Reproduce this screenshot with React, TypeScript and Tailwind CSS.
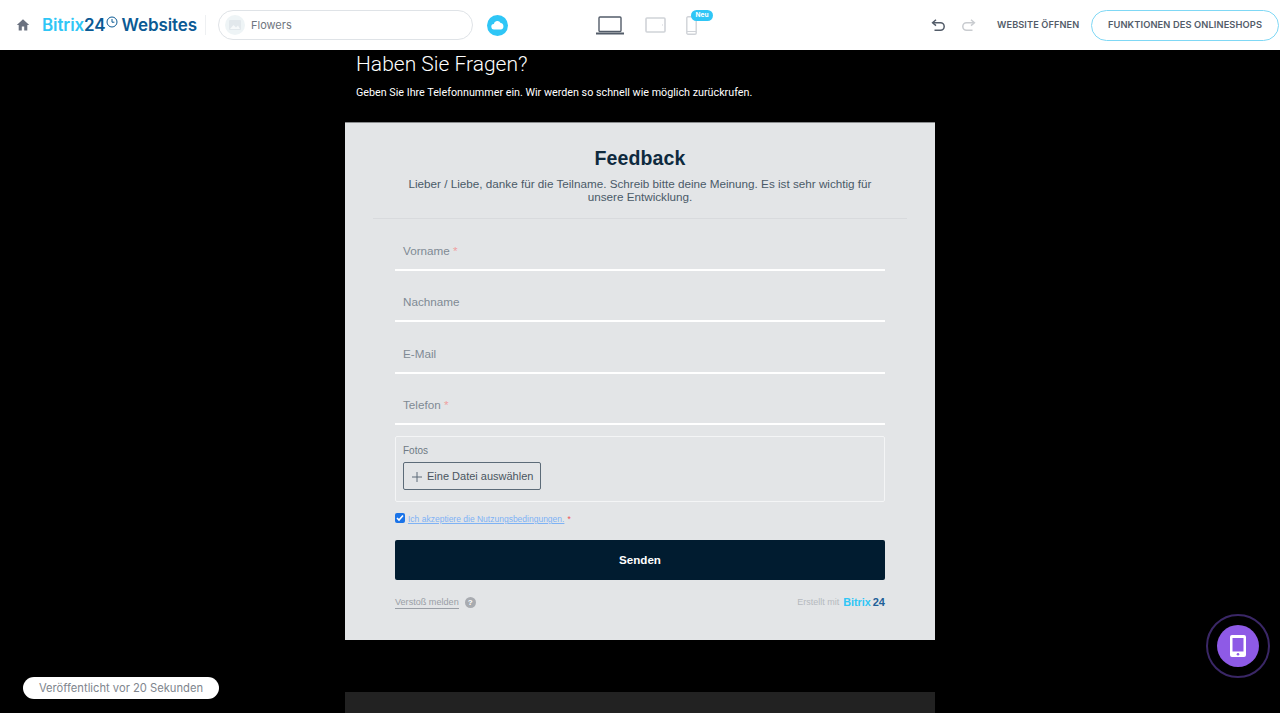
const Field = ({ label, star }: { label: string; star?: boolean }) => (
  <div className="h-[51.5px] flex flex-col justify-end border-b-2 border-white shrink-0">
    <div className="h-[28px] pl-[8px] text-[11.7px] leading-[19px] text-[#7f8a94]">
      {label}
      {star && <span className="text-[#f0a0a0]"> *</span>}
    </div>
  </div>
);

export default function App() {
  return (
    <div className="relative h-[713px] w-[1280px] overflow-hidden bg-black font-['Liberation_Sans',sans-serif]">
      <header className="h-[50px] bg-white flex items-center font-['Inter',sans-serif]">
        <svg className="ml-[16px] w-[14px] h-[14px] shrink-0" viewBox="0 0 14 14">
          <path d="M7 1.2 0.8 7h1.9v5.6h3.1V8.6h2.4v4h3.1V7h1.9z" fill="#6b7280" />
        </svg>
        <div className="ml-[12px] w-[154px] shrink-0 flex text-[17px] font-semibold leading-[24px] tracking-[-0.1px] whitespace-nowrap">
          <span className="text-[#2fc6f6]">Bitrix</span>
          <span className="text-[#0b5a94]">24</span>
          <svg className="w-[12px] h-[12px] shrink-0 mt-[3px]" viewBox="0 0 12 12" fill="none" stroke="#0b5a94" strokeWidth="1">
            <circle cx="6" cy="6" r="5" />
            <path d="M6 3v3.2h2.4" />
          </svg>
          <span className="ml-[4px] text-[#0b5a94]">Websites</span>
        </div>
        <div className="ml-[9px] w-px h-[20px] bg-[#eef0f2] shrink-0" />
        <div className="ml-[12px] w-[255px] h-[30px] shrink-0 rounded-full border border-[#dfe3e7] flex items-center pl-[6px]">
          <div className="w-[20px] h-[20px] rounded-full bg-[#eef4f6] flex items-center justify-center">
            <svg className="w-[12px] h-[10px]" viewBox="0 0 12 10">
              <rect width="12" height="10" rx="1" fill="#e2e8ec" />
              <path d="M1 9l3.5-4 2.5 2.5L9 5.5 11 9z" fill="#f6f9fa" />
            </svg>
          </div>
          <span className="ml-[6px] pt-[1px] text-[11px] text-[#6f7680]">Flowers</span>
        </div>
        <div className="ml-[14px] w-[21px] h-[21px] shrink-0 rounded-full bg-[#2fc6f6] flex items-center justify-center">
          <svg className="w-[13px] h-[10px]" viewBox="0 0 13 10">
            <path d="M3.2 9.5a2.7 2.7 0 0 1-.4-5.4A3.6 3.6 0 0 1 9.6 3 3.3 3.3 0 0 1 9.8 9.5z" fill="#fff" />
          </svg>
        </div>
        <svg className="ml-[88px] w-[28px] h-[19px] shrink-0" viewBox="0 0 28 19" fill="none">
          <rect x="3" y="1" width="22" height="14.5" rx="1" stroke="#535c69" strokeWidth="1.4" />
          <path d="M0.5 17.5h27" stroke="#535c69" strokeWidth="2" strokeLinecap="round" />
        </svg>
        <svg className="ml-[21px] w-[21px] h-[16px] shrink-0" viewBox="0 0 21 16" fill="none">
          <rect x="1" y="1" width="19" height="14" rx="1" stroke="#d0d3d8" strokeWidth="1.6" />
          <path d="M17.5 7.5v1" stroke="#d0d3d8" />
        </svg>
        <div className="relative ml-[20px] w-[11px] h-[19px] shrink-0">
          <svg className="w-[11px] h-[19px] absolute top-[0px]" viewBox="0 0 11 19" fill="none">
            <rect x="0.8" y="0.8" width="9.4" height="17.4" rx="1.2" stroke="#d0d3d8" strokeWidth="1.4" />
            <path d="M1 15.5h9" stroke="#d0d3d8" />
          </svg>
          <span className="absolute left-[5px] top-[-6px] w-[22px] h-[11px] rounded-full bg-[#2fc6f6] text-white text-[6.5px] font-bold leading-[11px] text-center">Neu</span>
        </div>
        <svg className="ml-[234px] w-[15px] h-[13px] shrink-0" viewBox="0 0 15 13" fill="none" stroke="#535c69" strokeWidth="1.5">
          <path d="M5 .8 1.6 3.8 5 6.6" />
          <path d="M2 3.8h7.5a3.6 3.6 0 0 1 0 7.4H3.5" />
        </svg>
        <svg className="ml-[15px] w-[15px] h-[13px] shrink-0" viewBox="0 0 15 13" fill="none" stroke="#c9ccd0" strokeWidth="1.5">
          <path d="M10 .8l3.4 3-3.4 2.8" />
          <path d="M13 3.8H5.5a3.6 3.6 0 0 0 0 7.4h6" />
        </svg>
        <span className="ml-[21px] w-[81px] shrink-0 text-[9.2px] font-semibold text-[#535c69] tracking-[0.1px] whitespace-nowrap">WEBSITE ÖFFNEN</span>
        <div className="ml-[13px] w-[188px] h-[31px] shrink-0 rounded-full border border-[#7fd8f5] flex items-center justify-center text-[9.3px] font-semibold text-[#535c69] tracking-[0.1px] whitespace-nowrap">
          FUNKTIONEN DES ONLINESHOPS
        </div>
      </header>

      <main className="w-[590px] ml-[345px]">
        <div className="pl-[11px] h-[72px] text-white font-['Roboto',sans-serif]">
          <h1 className="text-[21px] font-light leading-[28px] h-[28px]">Haben Sie Fragen?</h1>
          <p className="mt-[7px] text-[10.75px] leading-[16px] whitespace-nowrap">Geben Sie Ihre Telefonnummer ein. Wir werden so schnell wie möglich zurückrufen.</p>
        </div>
        <section className="h-[518px] bg-[#e3e5e7] border-t border-[#8a8c8e] flex flex-col">
          <div className="mx-[28px] h-[96px] border-b border-[#d8dadd] text-center">
            <h2 className="pt-[23px] text-[19.5px] leading-[24px] font-bold text-[#0e2a3e] tracking-[0.1px]">Feedback</h2>
            <p className="mt-[7px] px-[32px] text-[11.7px] leading-[13px] text-[#4a5a68]">
              Lieber / Liebe, danke für die Teilname. Schreib bitte deine Meinung. Es ist sehr wichtig für unsere Entwicklung.
            </p>
          </div>
          <div className="mx-[50px] flex flex-col">
            <Field label="Vorname" star />
            <Field label="Nachname" />
            <Field label="E-Mail" />
            <Field label="Telefon" star />
            <div className="mt-[11px] h-[66px] rounded-[2px] border border-[#f4f5f6] pl-[7px] pt-[8px]">
              <div className="text-[10px] leading-[12px] text-[#6f7a84]">Fotos</div>
              <div className="mt-[5px] w-[138px] h-[28px] pt-[1px] rounded-[2px] border border-[#5c6b78] flex items-center pl-[8px] text-[11px] text-[#4a5560] whitespace-nowrap">
                <svg className="w-[10px] h-[10px] mr-[5px] shrink-0" viewBox="0 0 10 10" stroke="#5c6b78" strokeWidth="1">
                  <path d="M5 0v10M0 5h10" />
                </svg>
                Eine Datei auswählen
              </div>
            </div>
            <div className="mt-[10px] h-[12px] flex items-center">
              <div className="w-[10px] h-[10px] rounded-[2px] bg-[#1a73e8] flex items-center justify-center">
                <svg className="w-[8px] h-[8px]" viewBox="0 0 8 8" fill="none" stroke="#fff" strokeWidth="1.6">
                  <path d="M1 4l2 2 4-4.5" />
                </svg>
              </div>
              <span className="ml-[3px] pt-[3px] text-[8.5px] text-[#7eb2f5] underline">Ich akzeptiere die Nutzungsbedingungen.</span>
              <span className="ml-[3px] pt-[3px] text-[8.5px] text-[#e55]">*</span>
            </div>
            <div className="mt-[16px] h-[40px] rounded-[2px] bg-[#011c30] flex items-center justify-center text-white text-[11.6px] font-bold">
              Senden
            </div>
            <div className="mt-[15px] h-[14px] flex items-center text-[9.1px]">
              <span className="text-[#9a9fa6] border-b border-[#9a9fa6] leading-[12px]">Verstoß melden</span>
              <span className="ml-[6px] w-[11px] h-[11px] rounded-full bg-[#a8abb0] text-white text-[8px] font-bold leading-[11px] text-center">?</span>
              <span className="ml-auto pt-[1px] text-[#b5b9be] text-[9px]">Erstellt mit</span>
              <span className="ml-[4px] text-[10.8px] font-bold text-[#2fc6f6]">Bitrix</span>
              <span className="ml-[2px] text-[11px] font-bold text-[#215f98]">24</span>
            </div>
          </div>
        </section>
        <div className="mt-[52px] h-[40px] bg-[#222222]" />
      </main>

      <div className="absolute left-[23px] top-[677px] w-[196px] h-[22px] pt-[1px] rounded-full bg-white flex items-center justify-center font-['Inter',sans-serif] text-[11.2px] text-[#80868e]">
        Veröffentlicht vor 20 Sekunden
      </div>

      <div className="absolute left-[1206px] top-[614px] w-[64px] h-[64px] rounded-full border-2 border-[#3a2766] flex items-center justify-center">
        <div className="w-[42px] h-[42px] rounded-full bg-[#8e5ae6] flex items-center justify-center">
          <svg className="w-[16px] h-[22px]" viewBox="0 0 16 22">
            <path fillRule="evenodd" d="M2 0h12a2 2 0 0 1 2 2v18a2 2 0 0 1-2 2H2a2 2 0 0 1-2-2V2a2 2 0 0 1 2-2zm.5 3v13.5h11V3z" fill="#fff" />
            <circle cx="8" cy="19.2" r="1.3" fill="#8e5ae6" />
          </svg>
        </div>
      </div>
    </div>
  );
}
